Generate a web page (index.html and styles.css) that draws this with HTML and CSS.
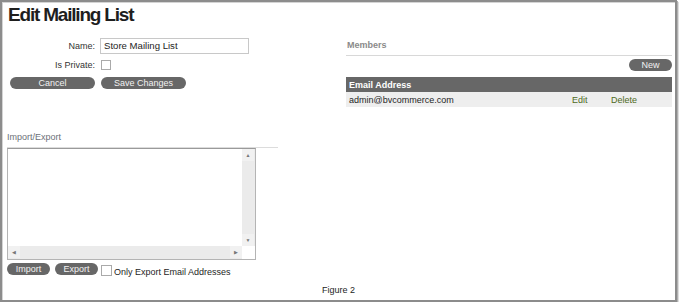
FILE: index.html
```html
<!DOCTYPE html>
<html lang="en">

<head>
    <meta charset="UTF-8">
    <meta name="viewport" content="width=device-width, initial-scale=1.0">
    <title>Edit Mailing List</title>
    <link rel="stylesheet" href="styles.css">
</head>

<body>
    <div class="frame">
        <h1 class="title">Edit Mailing List</h1>
        <div class="columns">
            <div class="left">
                <div class="form-row">
                    <label class="label">Name:</label>
                    <div class="textbox">Store Mailing List</div>
                </div>
                <div class="form-row">
                    <label class="label">Is Private:</label>
                    <span class="check"></span>
                </div>
                <div class="actions">
                    <span class="btn wide">Cancel</span>
                    <span class="btn wide">Save Changes</span>
                </div>

                <div class="import">
                    <h3 class="section-head">Import/Export</h3>
                    <div class="textarea">
                        <div class="ta-body"></div>
                        <div class="vscroll">
                            <span class="arrow">&#9650;</span>
                            <span class="track"></span>
                            <span class="arrow">&#9660;</span>
                        </div>
                        <div class="hscroll">
                            <span class="arrow">&#9664;</span>
                            <span class="track"></span>
                            <span class="arrow">&#9654;</span>
                        </div>
                        <div class="corner"></div>
                    </div>
                    <div class="import-actions">
                        <span class="btn small">Import</span>
                        <span class="btn small">Export</span>
                        <span class="check big"></span>
                        <span class="check-label">Only Export Email Addresses</span>
                    </div>
                </div>
            </div>

            <div class="right">
                <h3 class="members-head">Members</h3>
                <div class="toolbar"><span class="btn new">New</span></div>
                <table class="grid">
                    <tr class="head">
                        <th>Email Address</th>
                        <th></th>
                        <th></th>
                    </tr>
                    <tr class="row">
                        <td>admin@bvcommerce.com</td>
                        <td class="link edit">Edit</td>
                        <td class="link del">Delete</td>
                    </tr>
                </table>
            </div>
        </div>
        <div class="caption">Figure 2</div>
    </div>
</body>

</html>
```

FILE: styles.css
```css
body {
    margin: 0;
    font-family: "Liberation Sans", Arial, sans-serif;
    font-size: 9px;
    color: #333;
}

.frame {
    box-sizing: border-box;
    width: 677px;
    height: 302px;
    border: 2px solid #8c8c8c;
    box-shadow: inset 1px 1px 0 #d4d4d4, 1px 1px 0 #b0b0b0, 2px 2px 0 #dedede;
    background: #fff;
}

.title {
    margin: 1px 0 0 6px;
    height: 23px;
    font-size: 19px;
    line-height: 23px;
    letter-spacing: -1.2px;
    color: #1e1e1e;
}

.columns {
    display: flex;
}

.left {
    width: 280px;
    margin-left: 5px;
}

.right {
    width: 326px;
    margin-left: 59px;
}

/* form */

.form-row {
    display: flex;
    align-items: center;
    height: 16px;
    margin-bottom: 3px;
}

.form-row:first-child {
    margin-top: 12px;
}

.label {
    width: 88px;
    margin-right: 5px;
    text-align: right;
    color: #333;
}

.textbox {
    box-sizing: border-box;
    width: 149px;
    height: 16px;
    padding-left: 3px;
    border: 1px solid #c8c8c8;
    font-size: 9.6px;
    line-height: 14px;
    color: #1e1e1e;
}

.check {
    box-sizing: border-box;
    display: inline-block;
    width: 10px;
    height: 10px;
    margin-left: 1px;
    border: 1px solid #aaa;
    background: #fff;
}

.actions {
    display: flex;
    gap: 6px;
    margin-top: 4px;
    padding-left: 3px;
}

.btn {
    display: inline-block;
    height: 12px;
    line-height: 12px;
    border-radius: 6px;
    background: #676767;
    color: #f2f2f2;
    text-align: center;
    font-size: 9px;
}

.btn.wide {
    width: 85px;
}

.btn.small {
    width: 43px;
}

.btn.new {
    width: 43px;
}

/* import / export */

.import {
    margin-top: 42px;
}

.section-head {
    width: 271px;
    margin: 0;
    height: 13px;
    padding-bottom: 3px;
    border-bottom: 1px solid #dcdcdc;
    font-size: 9px;
    line-height: 13px;
    font-weight: normal;
    color: #6c7078;
}

.textarea {
    box-sizing: border-box;
    display: grid;
    grid-template-columns: 1fr 13px;
    grid-template-rows: 1fr 13px;
    width: 249px;
    height: 112px;
    border: 1px solid #b4b4b4;
    border-top-color: #9a9a9a;
}

.vscroll,
.hscroll {
    display: flex;
    background: #ebebeb;
}

.vscroll {
    flex-direction: column;
}

.arrow {
    width: 12px;
    height: 12px;
    line-height: 12px;
    text-align: center;
    font-size: 5px;
    color: #777;
    background: #f1f1f1;
}

.track {
    flex: 1;
}

.corner {
    background: #fff;
}

.import-actions {
    display: flex;
    align-items: flex-start;
    gap: 5px;
    margin-top: 3px;
}

.import-actions .check.big {
    width: 11px;
    height: 11px;
    margin: 2px 0 0 -2px;
}

.check-label {
    margin: 4px 0 0 -3px;
    font-size: 9px;
    color: #1e1e1e;
}

/* members */

.members-head {
    margin: 13px 0 0;
    padding: 0 0 4px 1px;
    border-bottom: 1px solid #d8d8d8;
    font-size: 9px;
    line-height: 12px;
    color: #8a8a8a;
}

.toolbar {
    display: flex;
    justify-content: flex-end;
    margin-top: 3px;
}

.grid {
    width: 100%;
    margin-top: 6px;
    border-collapse: collapse;
    font-size: 9px;
}

.grid th {
    height: 15px;
    padding: 0 3px;
    background: #676767;
    color: #fff;
    text-align: left;
}

.grid td {
    height: 15px;
    padding: 0 3px;
    background: #eeeeee;
    color: #1e1e1e;
}

.grid .link {
    color: #4f6b1c;
}

.grid .edit {
    width: 33px;
}

.grid .del {
    width: 58px;
}

.caption {
    margin-top: 8px;
    text-align: center;
    color: #1e1e1e;
}
```
